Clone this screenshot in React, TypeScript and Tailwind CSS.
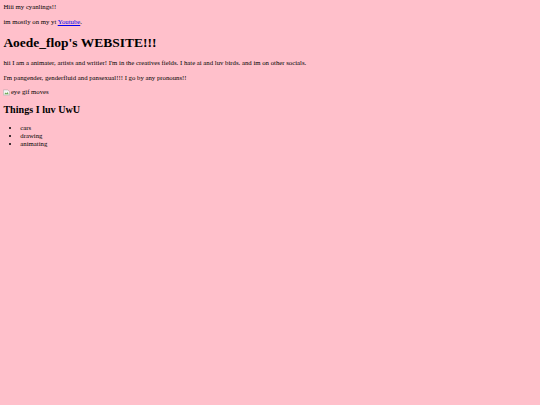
export default function App() {
  return (
    <div className="min-h-screen bg-[#ffc0cb] p-[3.375px] font-['Liberation_Serif',serif] text-[6.75px] leading-[1.149] text-black">
      {/* Greeting, bare text in body */}
      Hiii my cyanlings!!
      <p className="my-[1em]">
        im mostly on my yt{" "}
        <a href="#" className="text-[#0000ee] underline">
          Youtube
        </a>
        .
      </p>

      <h1 className="my-[0.67em] text-[2em] font-bold">Aoede_flop's WEBSITE!!!</h1>

      <p className="my-[1em]">
        hii I am a animater, artists and writier! I'm in the creatives fields. I hate ai and luv
        birds. and im on other socials.
      </p>
      <p className="my-[1em]">I'm pangender, genderfluid and pansexual!!! I go by any pronouns!!</p>

      {/* Broken image with alt text */}
      <p className="my-[1em] flex items-end">
        <svg width="7" height="7" viewBox="0 0 16 16" className="mr-[0.5px]">
          <path d="M1 2h10l4 4v8H1z" fill="#f4f4f4" stroke="#9a9a9a" strokeWidth="1" />
          <path d="M3 12l3-4 2 2 2-3 3 5z" fill="#6aa84f" />
        </svg>
        <span>eye gif moves</span>
      </p>

      <h2 className="my-[0.83em] text-[1.5em] font-bold">Things I luv UwU</h2>

      <ul className="my-[1em] list-disc pl-[16.9px]">
        <li>cars</li>
        <li>drawing</li>
        <li>animating</li>
      </ul>
    </div>
  );
}
